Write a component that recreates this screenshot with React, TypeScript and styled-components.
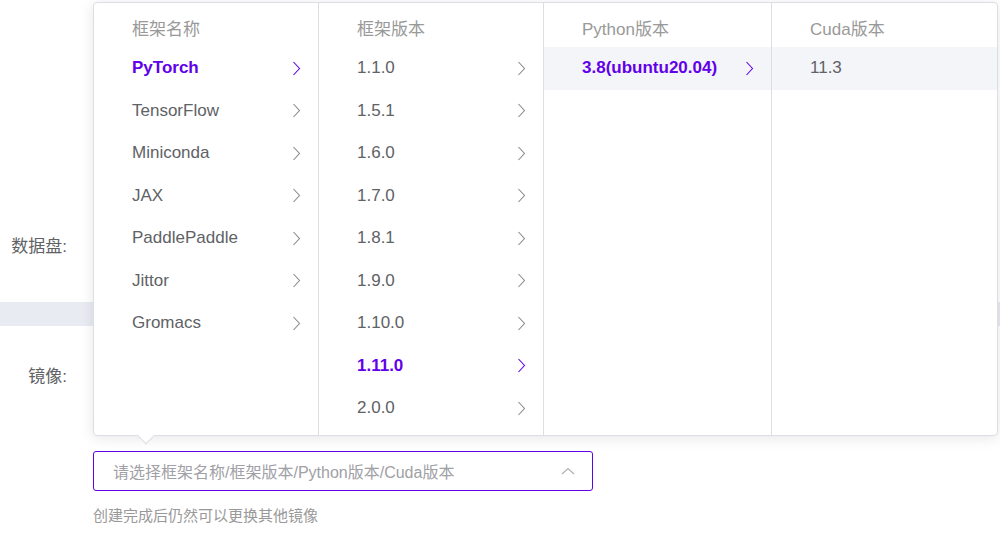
import React from "react";
import styled, { createGlobalStyle } from "styled-components";

const Global = createGlobalStyle`
  html, body { margin: 0; padding: 0; background: #fff; }
  body { font-family: "Liberation Sans", "Noto Sans CJK SC", sans-serif; overflow: hidden; }
  * { box-sizing: border-box; }
`;

const PURPLE = "#6200ea";

const Page = styled.div`
  position: relative;
  width: 1000px;
  height: 540px;
  overflow: hidden;
  padding-top: 230px;
  display: flex;
  flex-direction: column;
`;

const FormRow = styled.div<{ $top?: number }>`
  display: grid;
  grid-template-columns: 93px 1fr;
  margin-top: ${(p) => p.$top ?? 0}px;
`;

const Label = styled.div`
  text-align: right;
  padding-right: 26px;
  font-size: 17px;
  line-height: 34px;
  color: #606266;
`;

const Band = styled.div`
  margin-top: 38px;
  height: 24px;
  background: #e9ebf3;
`;

const Field = styled.div`
  display: flex;
  flex-direction: column;
  padding-top: 91px;
`;

const Anchor = styled.div`
  position: relative;
  width: 500px;
`;

const Input = styled.div`
  height: 40px;
  border: 1px solid ${PURPLE};
  border-radius: 3px;
  display: flex;
  align-items: center;
  justify-content: space-between;
  padding: 0 17px 0 19px;
  font-size: 16px;
  color: #a0a0a6;
`;

const Helper = styled.div`
  margin-top: 15px;
  font-size: 15px;
  line-height: 20px;
  color: #999;
`;

const Popover = styled.div`
  position: absolute;
  left: 0;
  bottom: calc(100% + 15px);
  width: 905px;
  height: 434px;
  background: #fff;
  border: 1px solid #dcdee6;
  border-radius: 4px;
  box-shadow: 0 2px 14px rgba(0, 0, 0, 0.1);
  display: flex;
  z-index: 2;
`;

const Arrow = styled.div`
  position: absolute;
  left: 46px;
  bottom: -7px;
  width: 12px;
  height: 12px;
  background: #fff;
  border-right: 1px solid #dcdee6;
  border-bottom: 1px solid #dcdee6;
  transform: rotate(45deg);
`;

const Column = styled.div<{ $w: number; $last?: boolean }>`
  width: ${(p) => p.$w}px;
  flex: none;
  border-right: ${(p) => (p.$last ? "none" : "1px solid #dcdee6")};
  display: flex;
  flex-direction: column;
`;

const Header = styled.div`
  height: 44px;
  flex: none;
  padding: 17px 0 0 38px;
  font-size: 17px;
  line-height: 20px;
  color: #999;
`;

const Item = styled.div<{ $active?: boolean; $hover?: boolean }>`
  height: 42.5px;
  flex: none;
  display: flex;
  align-items: center;
  justify-content: space-between;
  padding: 0 17px 0 38px;
  font-size: 17px;
  color: ${(p) => (p.$active ? PURPLE : "#606266")};
  font-weight: ${(p) => (p.$active ? 700 : 400)};
  background: ${(p) => (p.$hover ? "#f4f5f9" : "transparent")};
`;

const Chevron = ({ color }: { color: string }) => (
  <svg width="9" height="15" viewBox="0 0 9 15">
    <polyline points="1.5,1 7.5,7.5 1.5,14" fill="none" stroke={color} strokeWidth="1.1" />
  </svg>
);

const UpIcon = () => (
  <svg width="14" height="8" viewBox="0 0 14 8">
    <polyline points="1,7 7,1.5 13,7" fill="none" stroke="#b0b0b0" strokeWidth="1.2" />
  </svg>
);

const frameworks = ["PyTorch", "TensorFlow", "Miniconda", "JAX", "PaddlePaddle", "Jittor", "Gromacs"];
const versions = ["1.1.0", "1.5.1", "1.6.0", "1.7.0", "1.8.1", "1.9.0", "1.10.0", "1.11.0", "2.0.0"];

export default function App() {
  return (
    <>
      <Global />
      <Page>
        <FormRow>
          <Label>数据盘:</Label>
          <div />
        </FormRow>
        <Band />
        <FormRow $top={34}>
          <Label>镜像:</Label>
          <Field>
            <Anchor>
              <Popover>
                <Column $w={225}>
                  <Header>框架名称</Header>
                  {frameworks.map((f) => (
                    <Item key={f} $active={f === "PyTorch"}>
                      {f}
                      <Chevron color={f === "PyTorch" ? PURPLE : "#8a8a8a"} />
                    </Item>
                  ))}
                </Column>
                <Column $w={225}>
                  <Header>框架版本</Header>
                  {versions.map((v) => (
                    <Item key={v} $active={v === "1.11.0"}>
                      {v}
                      <Chevron color={v === "1.11.0" ? PURPLE : "#8a8a8a"} />
                    </Item>
                  ))}
                </Column>
                <Column $w={228}>
                  <Header>Python版本</Header>
                  <Item $active $hover>
                    3.8(ubuntu20.04)
                    <Chevron color={PURPLE} />
                  </Item>
                </Column>
                <Column $w={225} $last>
                  <Header>Cuda版本</Header>
                  <Item $hover>11.3</Item>
                </Column>
                <Arrow />
              </Popover>
              <Input>
                请选择框架名称/框架版本/Python版本/Cuda版本
                <UpIcon />
              </Input>
            </Anchor>
            <Helper>创建完成后仍然可以更换其他镜像</Helper>
          </Field>
        </FormRow>
      </Page>
    </>
  );
}
